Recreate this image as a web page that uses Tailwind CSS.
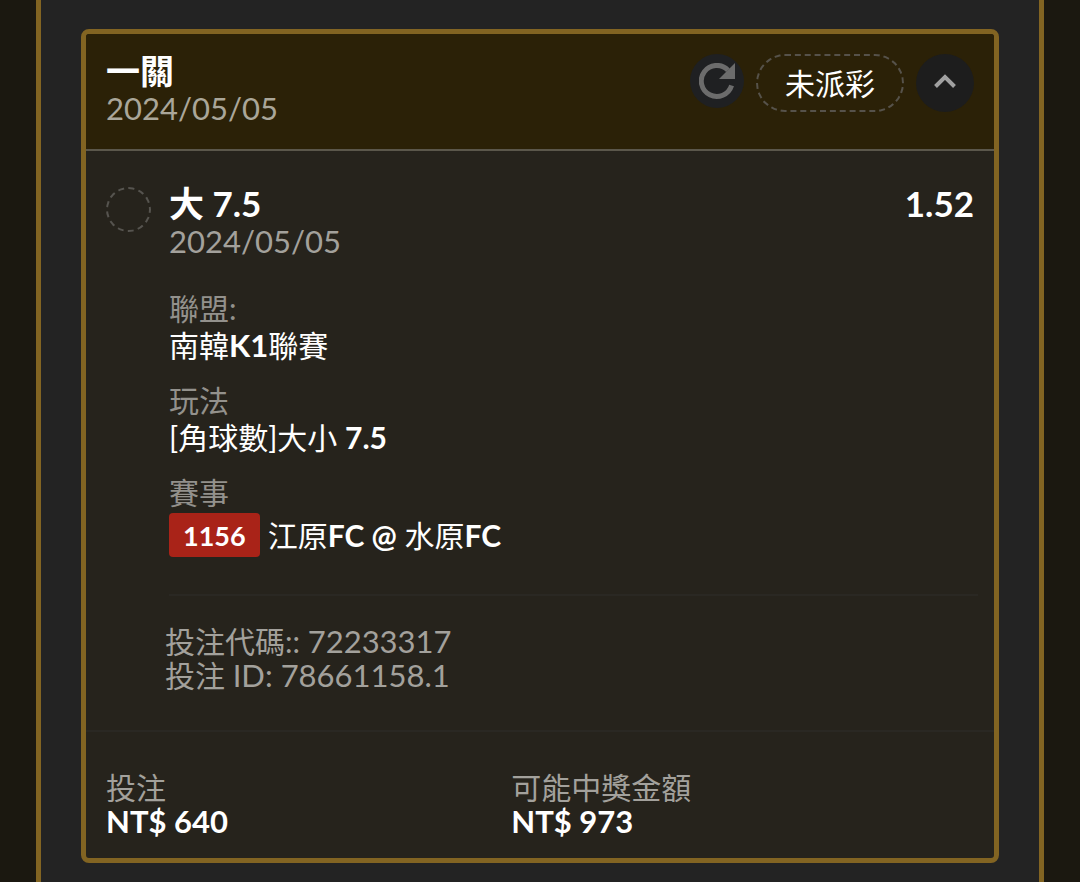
<!DOCTYPE html>
<html lang="zh-Hant">
<head>
  <meta charset="UTF-8" />
  <meta name="viewport" content="width=device-width, initial-scale=1" />
  <title>投注紀錄</title>
  <script src="https://cdn.jsdelivr.net/npm/@tailwindcss/browser@4"></script>
</head>
<body class="bg-[#1b1810] text-white min-h-screen font-[Lato,'Noto_Sans_CJK_TC',sans-serif] text-[30px]">

  <main class="mx-9 min-h-screen bg-[#232323] border-x-5 border-[#826422] px-10 pt-[29px] pb-5">
    <article class="bg-[#26231c] border-5 border-[#826422] rounded-lg overflow-hidden">

      <header class="flex justify-between items-start bg-[#2b2107] border-b-2 border-[#5b574b] px-5 pt-[18px] pb-[22px]">
        <div>
          <h1 class="text-[34px] leading-[37px] font-bold">一關</h1>
          <p class="text-[31px] leading-[38px] text-[#aaa699]">2024/05/05</p>
        </div>
        <div class="flex items-start gap-3 pt-0.5">
          <button type="button" aria-label="重新整理" class="size-[54px] rounded-full bg-[#1f2022] flex items-center justify-center">
            <svg viewBox="0 0 36 36" class="size-9" fill="none">
              <path d="M32.600 22.500A15.500 15.500 0 1 1 29 7.200" stroke="#6c6c6c" stroke-width="5" />
              <path d="M36 0v16H20z" fill="#6c6c6c" />
            </svg>
          </button>
          <span class="h-[58px] px-[27px] rounded-full border-2 border-dashed border-[#56524a] flex items-center">未派彩</span>
          <button type="button" aria-label="收合" class="size-[58px] rounded-full bg-[#1d1d1d] flex items-center justify-center pb-1">
            <svg viewBox="0 0 22 14" class="w-[22px] h-3.5" fill="none">
              <path d="M1.5 12.5 11 3l9.500 9.500" stroke="#a0a0a0" stroke-width="4" />
            </svg>
          </button>
        </div>
      </header>

      <section class="flex items-start px-5 pt-[34px]">
        <span class="size-[45px] mt-0.5 mr-[18px] shrink-0 rounded-full border-2 border-dashed border-[#56544f]"></span>
        <div class="grow">
          <div class="flex justify-between text-[35px] leading-[37px]">
            <h2 class="font-bold">大 7.5</h2>
            <strong>1.52</strong>
          </div>
          <p class="text-[31px] leading-[38px] text-[#a3a19c]">2024/05/05</p>

          <dl class="mt-[30px] leading-[37px]">
            <dt class="text-[#93918c]">聯盟:</dt>
            <dd class="mb-[18px]">南韓<b class="text-[31px]">K1</b>聯賽</dd>
            <dt class="text-[#93918c]">玩法</dt>
            <dd class="mb-[18px]">[角球數]大小 <b>7.5</b></dd>
            <dt class="text-[#93918c]">賽事</dt>
            <dd class="flex items-center gap-2 mt-0.5">
              <span class="bg-[#a92318] rounded px-3.5 h-[44px] text-[27px] leading-[45px] font-bold">1156</span>
              <span>江原<b>FC @</b> 水原<b>FC</b></span>
            </dd>
          </dl>
        </div>
      </section>

      <section class="ml-[83px] mr-4 mt-[37px] border-t-2 border-[#2a2823] pt-7 pb-[38px] leading-[34px] text-[#a3a19c]">
        <p class="-ml-1">投注代碼:: <span class="text-[31px]">72233317</span></p>
        <p class="-ml-1">投注 <span class="text-[31px]">ID: 78661158.1</span></p>
      </section>

      <footer class="grid grid-cols-[467fr_533fr] border-t-2 border-[#2a2823] px-5 pt-[38px] pb-5 leading-[34px]">
        <div>
          <p class="text-[#a3a19c]">投注</p>
          <p class="text-[31px] font-bold">NT$ 640</p>
        </div>
        <div>
          <p class="text-[#a3a19c]">可能中獎金額</p>
          <p class="text-[31px] font-bold">NT$ 973</p>
        </div>
      </footer>

    </article>
  </main>

</body>
</html>
